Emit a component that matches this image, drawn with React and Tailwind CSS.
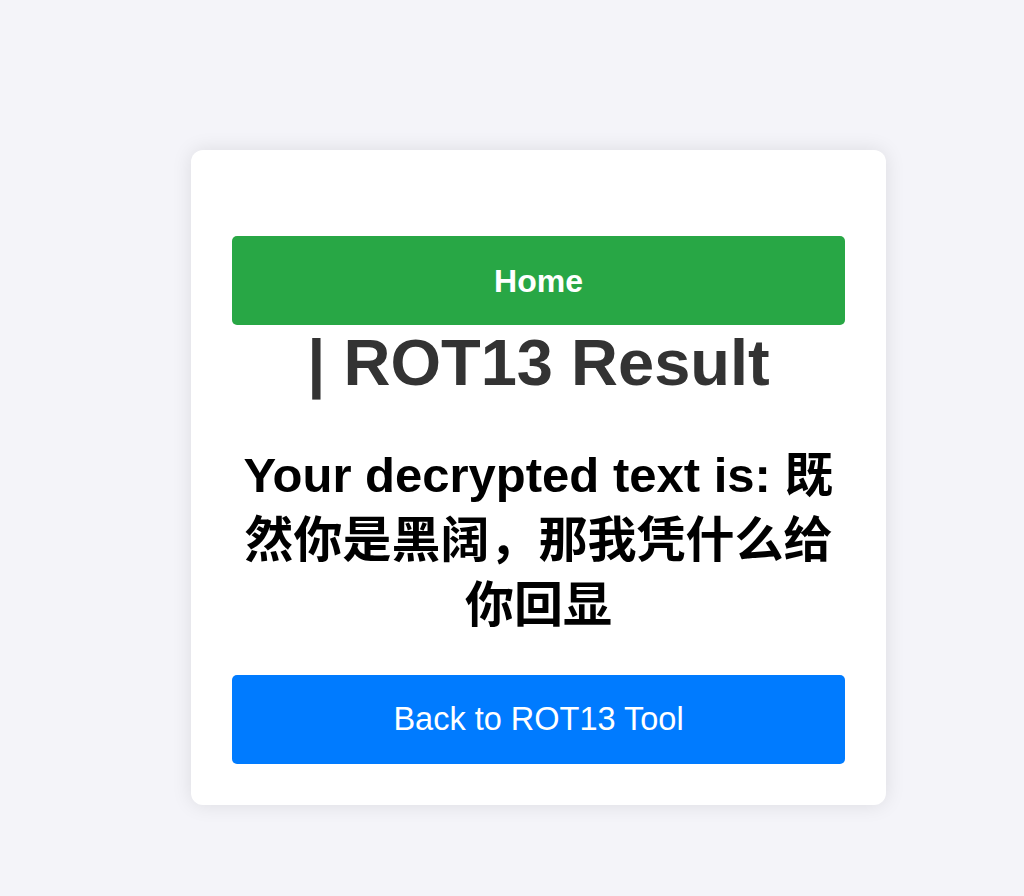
export default function App() {
  return (
    <div
      className="min-h-screen bg-[#f4f4f9] pt-[150px] pl-[191px]"
      style={{ fontFamily: '"Liberation Sans", Arial, "Noto Sans CJK SC", sans-serif' }}
    >
      <div className="w-[695px] rounded-[12px] bg-white px-[41px] pt-[86px] pb-[41px] text-center shadow-[0_0_20px_rgba(0,0,0,0.1)]">
        <a
          href="#"
          className="flex h-[89px] items-center justify-center rounded-[5px] bg-[#28a745] text-[32px] font-bold text-white"
        >
          Home
        </a>
        <h1 className="text-[65px] leading-[76px] font-bold text-[#333]">| ROT13 Result</h1>
        <h2 className="mt-[42px] text-[49px] leading-[65px] font-bold text-black">
          Your decrypted text is: 既然你是黑阔，那我凭什么给你回显
        </h2>
        <a
          href="#"
          className="mt-[37px] flex h-[89px] items-center justify-center rounded-[5px] bg-[#007bff] text-[32.5px] text-white"
        >
          Back to ROT13 Tool
        </a>
      </div>
    </div>
  );
}
